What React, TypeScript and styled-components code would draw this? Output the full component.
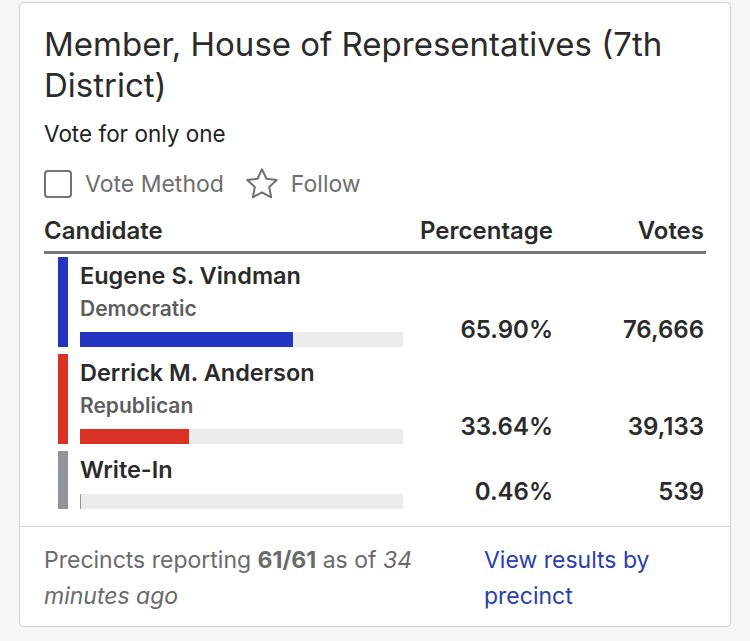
import styled, { createGlobalStyle } from "styled-components";

const GlobalStyle = createGlobalStyle`
  body {
    margin: 0;
    background: #f7f7f7;
    font-family: Inter, "Noto Sans", sans-serif;
  }
`;

const Page = styled.div`
  padding: 2px 19px 0 19px;
`;

const Card = styled.div`
  background: #ffffff;
  border: 1px solid #d2d2d2;
  border-radius: 4px;
  width: 710px;
`;

const Header = styled.div`
  padding: 21px 24px 0 24px;
`;

const Title = styled.h1`
  margin: 0;
  font-size: 33px;
  line-height: 41px;
  font-weight: 400;
  color: #2b2b2b;
`;

const Subtitle = styled.div`
  margin-top: 14px;
  font-size: 22.5px;
  line-height: 28px;
  color: #222;
`;

const Actions = styled.div`
  display: flex;
  align-items: center;
  gap: 22px;
  margin-top: 20px;
  color: #6e6e6e;
  font-size: 23px;
  height: 32px;
`;

const Action = styled.div`
  display: flex;
  align-items: center;
  gap: 13px;
`;

const Box = styled.span`
  width: 28px;
  height: 28px;
  border: 2px solid #737373;
  border-radius: 4px;
  box-sizing: border-box;
`;

const Table = styled.div`
  margin: 17px 24px 0 24px;
  display: grid;
  grid-template-columns: 1fr 150px 151px;
  padding-bottom: 17px;
`;

const Th = styled.div<{ $right?: boolean }>`
  font-size: 24px;
  font-weight: 600;
  color: #2b2b2b;
  line-height: 28px;
  padding-bottom: 6px;
  text-align: ${(p) => (p.$right ? "right" : "left")};
  padding-right: ${(p) => (p.$right ? "2px" : "0")};
  border-bottom: 3px solid #777;
  margin-bottom: -4px;
`;

const Cand = styled.div`
  display: flex;
  gap: 12px;
  padding-left: 14px;
  margin-top: 7px;
`;

const Stripe = styled.div<{ $c: string }>`
  width: 10px;
  background: ${(p) => p.$c};
`;

const Info = styled.div`
  display: flex;
  flex-direction: column;
  width: 323px;
`;

const Name = styled.div`
  font-size: 23.5px;
  font-weight: 600;
  color: #2b2b2b;
  line-height: 28px;
  margin-top: 5px;
`;

const Party = styled.div`
  font-size: 21px;
  font-weight: 600;
  color: #5e5e5e;
  line-height: 26px;
  margin-top: 6px;
`;

const Track = styled.div`
  height: 15px;
  background: #ececec;
  margin-top: 10px;
`;

const Fill = styled.div<{ $c: string }>`
  height: 100%;
  background: ${(p) => p.$c};
`;

const Num = styled.div`
  align-self: end;
  text-align: right;
  font-size: 24px;
  font-weight: 600;
  color: #2b2b2b;
  line-height: 28px;
  padding-bottom: 3px;
  padding-right: 2px;
`;

const Footer = styled.div`
  border-top: 1px solid #d2d2d2;
  display: grid;
  grid-template-columns: 1fr 222px;
  gap: 40px;
  padding: 15px 24px 12px 24px;
  font-size: 23px;
  line-height: 36px;
`;

const Report = styled.div`
  color: #6a6a6a;
  b {
    font-weight: 700;
  }
  i {
    font-style: italic;
  }
`;

const Link = styled.a`
  color: #2a3eaa;
  text-decoration: none;
`;

const StarIcon = () => (
  <svg width="32" height="32" viewBox="2 2 20 20" fill="none" stroke="#707070" strokeWidth="1.25" strokeLinejoin="round">
    <path d="M12 2.8l2.8 5.9 6.4.8-4.7 4.4 1.2 6.4L12 17.2l-5.7 3.1 1.2-6.4-4.7-4.4 6.4-.8z" />
  </svg>
);

const rows = [
  { name: "Eugene S. Vindman", party: "Democratic", color: "#2135c0", pct: 65.9, label: "65.90%", votes: "76,666" },
  { name: "Derrick M. Anderson", party: "Republican", color: "#d93124", pct: 33.64, label: "33.64%", votes: "39,133" },
  { name: "Write-In", party: "", color: "#93959b", pct: 0.46, label: "0.46%", votes: "539" },
];

function App() {
  return (
    <>
      <GlobalStyle />
      <Page>
        <Card>
          <Header>
            <Title>Member, House of Representatives (7th District)</Title>
            <Subtitle>Vote for only one</Subtitle>
            <Actions>
              <Action>
                <Box />
                Vote Method
              </Action>
              <Action>
                <StarIcon />
                Follow
              </Action>
            </Actions>
          </Header>
          <Table>
            <Th>Candidate</Th>
            <Th $right>Percentage</Th>
            <Th $right>Votes</Th>
            {rows.map((r) => (
              <>
                <Cand key={r.name}>
                  <Stripe $c={r.color} />
                  <Info>
                    <Name>{r.name}</Name>
                    {r.party ? <Party>{r.party}</Party> : null}
                    <Track>
                      <Fill $c={r.color} style={{ width: r.pct + "%" }} />
                    </Track>
                  </Info>
                </Cand>
                <Num>{r.label}</Num>
                <Num>{r.votes}</Num>
              </>
            ))}
          </Table>
          <Footer>
            <Report>
              Precincts reporting <b>61/61</b> as of <i>34 minutes ago</i>
            </Report>
            <Link href="#">View results by precinct</Link>
          </Footer>
        </Card>
      </Page>
    </>
  );
}

export default App;
